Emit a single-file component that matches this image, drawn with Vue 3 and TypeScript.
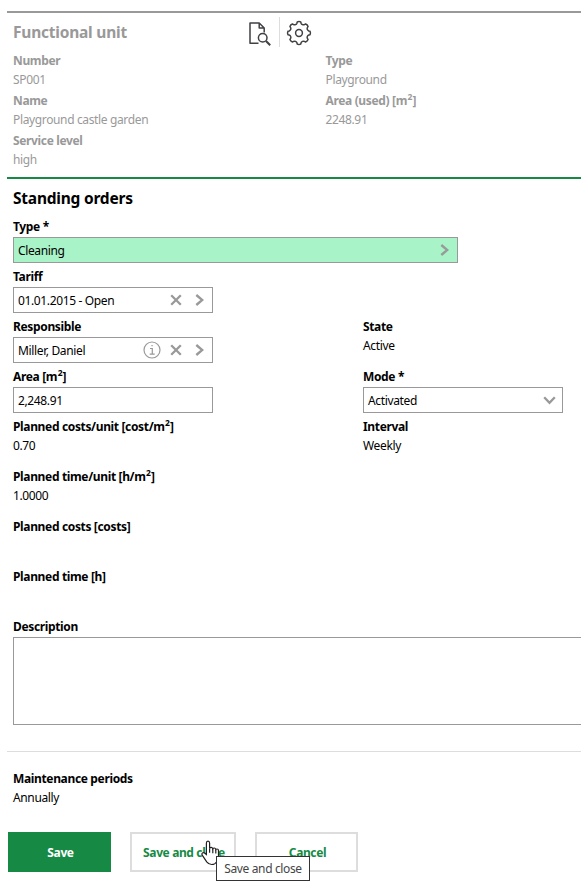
<script setup lang="ts">
interface Field {
  label: string
  unit?: string
  close?: string
  value?: string
  kind?: 'lookup' | 'input' | 'select' | 'required'
  info?: boolean
}

const unitFields: Field[] = [
  { label: 'Number', value: 'SP001' },
  { label: 'Type', value: 'Playground' },
  { label: 'Name', value: 'Playground castle garden' },
  { label: 'Area (used) [m', unit: '2', close: ']', value: '2248.91' },
  { label: 'Service level', value: 'high' },
]

const rows: Field[][] = [
  [{ label: 'Type *', value: 'Cleaning', kind: 'required' }],
  [{ label: 'Tariff', value: '01.01.2015 - Open', kind: 'lookup' }],
  [
    { label: 'Responsible', value: 'Miller, Daniel', kind: 'lookup', info: true },
    { label: 'State', value: 'Active' },
  ],
  [
    { label: 'Area [m', unit: '2', close: ']', value: '2,248.91', kind: 'input' },
    { label: 'Mode *', value: 'Activated', kind: 'select' },
  ],
  [
    { label: 'Planned costs/unit [cost/m', unit: '2', close: ']', value: '0.70' },
    { label: 'Interval', value: 'Weekly' },
  ],
  [{ label: 'Planned time/unit [h/m', unit: '2', close: ']', value: '1.0000' }],
  [{ label: 'Planned costs [costs]' }],
  [{ label: 'Planned time [h]' }],
]

function point(deg: number, r: number): string {
  const a = (deg * Math.PI) / 180
  return `${(13 + r * Math.cos(a)).toFixed(2)} ${(13 + r * Math.sin(a)).toFixed(2)}`
}

const gearPath = Array.from({ length: 8 }, (_, i) => {
  const a = i * 45
  return `${i ? 'L' : 'M'}${point(a - 9, 11.2)}Q${point(a, 11.9)} ${point(a + 9, 11.2)}L${point(a + 12, 10)}A2.45 2.45 0 0 0 ${point(a + 33, 10)}`
}).join('') + 'Z'
</script>

<template>
  <main class="page">
    <section class="unit">
      <header class="unit-head">
        <h2>Functional unit</h2>
        <svg class="doc" width="24" height="26" viewBox="0 0 24 26">
          <path d="M10.5 23.2H2V3h9.2l5 5v4.5M11.2 3v5h5" />
          <circle cx="14.7" cy="17.8" r="4.3" />
          <path d="m18 21 4.2 4.2" class="handle" />
        </svg>
        <span class="divider"></span>
        <svg class="gear" width="26" height="26" viewBox="0 0 26 26">
          <path :d="gearPath" />
          <circle cx="13" cy="13" r="3.4" />
        </svg>
      </header>
      <div class="unit-grid">
        <div v-for="f in unitFields" :key="f.label" class="field">
          <div class="label">{{ f.label }}<sup v-if="f.unit">{{ f.unit }}</sup>{{ f.close }}</div>
          <div class="value">{{ f.value }}</div>
        </div>
      </div>
    </section>

    <section class="orders">
      <h2>Standing orders</h2>
      <div v-for="(row, i) in rows" :key="i" class="row">
        <div v-for="f in row" :key="f.label" class="field">
          <div class="label">{{ f.label }}<sup v-if="f.unit">{{ f.unit }}</sup>{{ f.close }}</div>
          <div v-if="f.kind" class="control" :class="f.kind">
            <span class="text">{{ f.value }}</span>
            <svg v-if="f.info" class="info" width="18" height="18" viewBox="0 0 18 18">
              <circle cx="9" cy="9" r="8" />
              <path d="M7 7.5h2.3v5.7M6.7 13.2h5M8.4 4.7h1.3" />
            </svg>
            <svg v-if="f.kind === 'lookup'" class="clear" width="12" height="12" viewBox="0 0 12 12">
              <path d="m1.2 1.2 9.6 9.6M10.8 1.2 1.2 10.8" />
            </svg>
            <svg v-if="f.kind === 'lookup' || f.kind === 'required'" class="next" width="9" height="12" viewBox="0 0 9 12">
              <path d="m1.3 1 6 5-6 5" />
            </svg>
            <svg v-if="f.kind === 'select'" class="down" width="13" height="9" viewBox="0 0 13 9">
              <path d="m1.2 1.2 5.3 5.6 5.3-5.6" />
            </svg>
          </div>
          <div v-else class="value">{{ f.value }}</div>
        </div>
      </div>
      <div class="label">Description</div>
      <div class="textarea"></div>
    </section>

    <section class="periods">
      <div class="label">Maintenance periods</div>
      <div class="value">Annually</div>
    </section>

    <footer class="actions">
      <button class="primary">Save</button>
      <button class="wide">Save and close</button>
      <button>Cancel</button>
      <svg class="cursor" width="19" height="26" viewBox="0 0 19 26">
        <path d="M5.4 14.5V3q0-1.9 1.6-1.9T8.6 3v5.3q.4-1 1.6-1t1.6 1.5q.4-.8 1.5-.8t1.5 1.5q.3-.5 1.2-.5 1.5 0 1.5 1.7v5.8q0 3-1.8 5.2-1.6 2.8-5 2.8-3 0-5-2.6L1.4 15.3q-1-1.3-.1-2.2 1-.8 2.2 0z" />
        <path d="M8.6 8.3v4.5M11.8 9v4.2M14.8 9.8v3.6" />
      </svg>
      <div class="tooltip">Save and close</div>
    </footer>
  </main>
</template>

<style>
body {
  margin: 0;
  background: #fff;
  overflow: hidden;
}
</style>

<style scoped>
.page {
  box-sizing: border-box;
  width: 581px;
  height: 886px;
  padding: 11px 0 0 7px;
  overflow: hidden;
  font: 12px/18px "Noto Sans", "Open Sans", sans-serif;
  letter-spacing: -0.36px;
  color: #000;
}
h2 {
  margin: 0;
  font-size: 15.5px;
  line-height: 22px;
  font-weight: 700;
  letter-spacing: -0.22px;
}
.unit {
  box-sizing: border-box;
  height: 168px;
  padding-left: 6px;
  border-top: 2px solid #999;
  border-bottom: 2px solid #168a45;
  color: #999;
}
.unit-head {
  display: flex;
  align-items: center;
  height: 38px;
}
.unit-head h2 {
  width: 235px;
  margin-top: -1px;
}
svg {
  flex: none;
  fill: none;
}
.doc,
.gear {
  stroke: #404045;
  stroke-width: 1.5;
  stroke-linejoin: round;
}
.gear {
  margin-top: 2px;
}
.doc {
  margin-top: 1px;
}
.doc .handle {
  stroke-width: 2;
}
.divider {
  width: 1px;
  height: 30px;
  margin: 0 6px 0 7px;
  background: #ddd;
}
.unit-grid {
  display: grid;
  grid-template-columns: 312.5px 1fr;
  grid-auto-rows: 40px;
}
.label {
  height: 20px;
  line-height: 20px;
  font-weight: 700;
  letter-spacing: -0.35px;
  white-space: nowrap;
}
sup {
  margin-left: 0.5px;
  font-size: 8.5px;
  line-height: 0;
  letter-spacing: 0;
  vertical-align: 5px;
}
.value {
  height: 18px;
}
.orders {
  box-sizing: border-box;
  height: 572px;
  padding: 8px 0 0 6px;
}
.orders h2 {
  height: 30px;
}
.row {
  display: grid;
  grid-template-columns: 350px 1fr;
  height: 50px;
}
.control {
  box-sizing: border-box;
  display: flex;
  align-items: center;
  width: 200px;
  height: 26px;
  padding: 0 8px 0 4px;
  border: 1px solid #999;
}
.control.required {
  width: 445px;
  background: #a8f3c8;
}
.control.select {
  padding-right: 6px;
}
.control svg {
  stroke: #999;
  stroke-width: 2.3;
}
.text {
  flex: 1;
  padding-top: 2px;
}
.control .info {
  margin-right: 9px;
  stroke-width: 1.2;
}
.clear {
  margin-right: 13px;
}
.textarea {
  height: 86px;
  border: 1px solid #999;
  border-right: 0;
}
.periods {
  box-sizing: border-box;
  height: 81px;
  padding: 17px 0 0 6px;
  border-top: 1px solid #ddd;
}
.actions {
  position: relative;
  display: flex;
  gap: 19px;
  padding-left: 1px;
}
button {
  width: 103px;
  height: 40px;
  padding: 2px 0 0 2px;
  border: 2px solid #ddd;
  background: #fff;
  font: inherit;
  font-weight: 700;
  letter-spacing: -0.38px;
  color: #168a45;
}
.wide {
  width: 106px;
}
.primary {
  border-color: #168a45;
  background: #168a45;
  color: #fff;
}
.cursor {
  position: absolute;
  left: 194px;
  top: 8px;
  fill: #fff;
  stroke: #222;
  stroke-width: 1.2;
}
.tooltip {
  box-sizing: border-box;
  position: absolute;
  left: 209px;
  top: 24px;
  width: 94px;
  height: 25px;
  padding-top: 3px;
  border: 1px solid #333;
  background: #fff;
  color: #444;
  line-height: 18px;
  text-align: center;
}
</style>
